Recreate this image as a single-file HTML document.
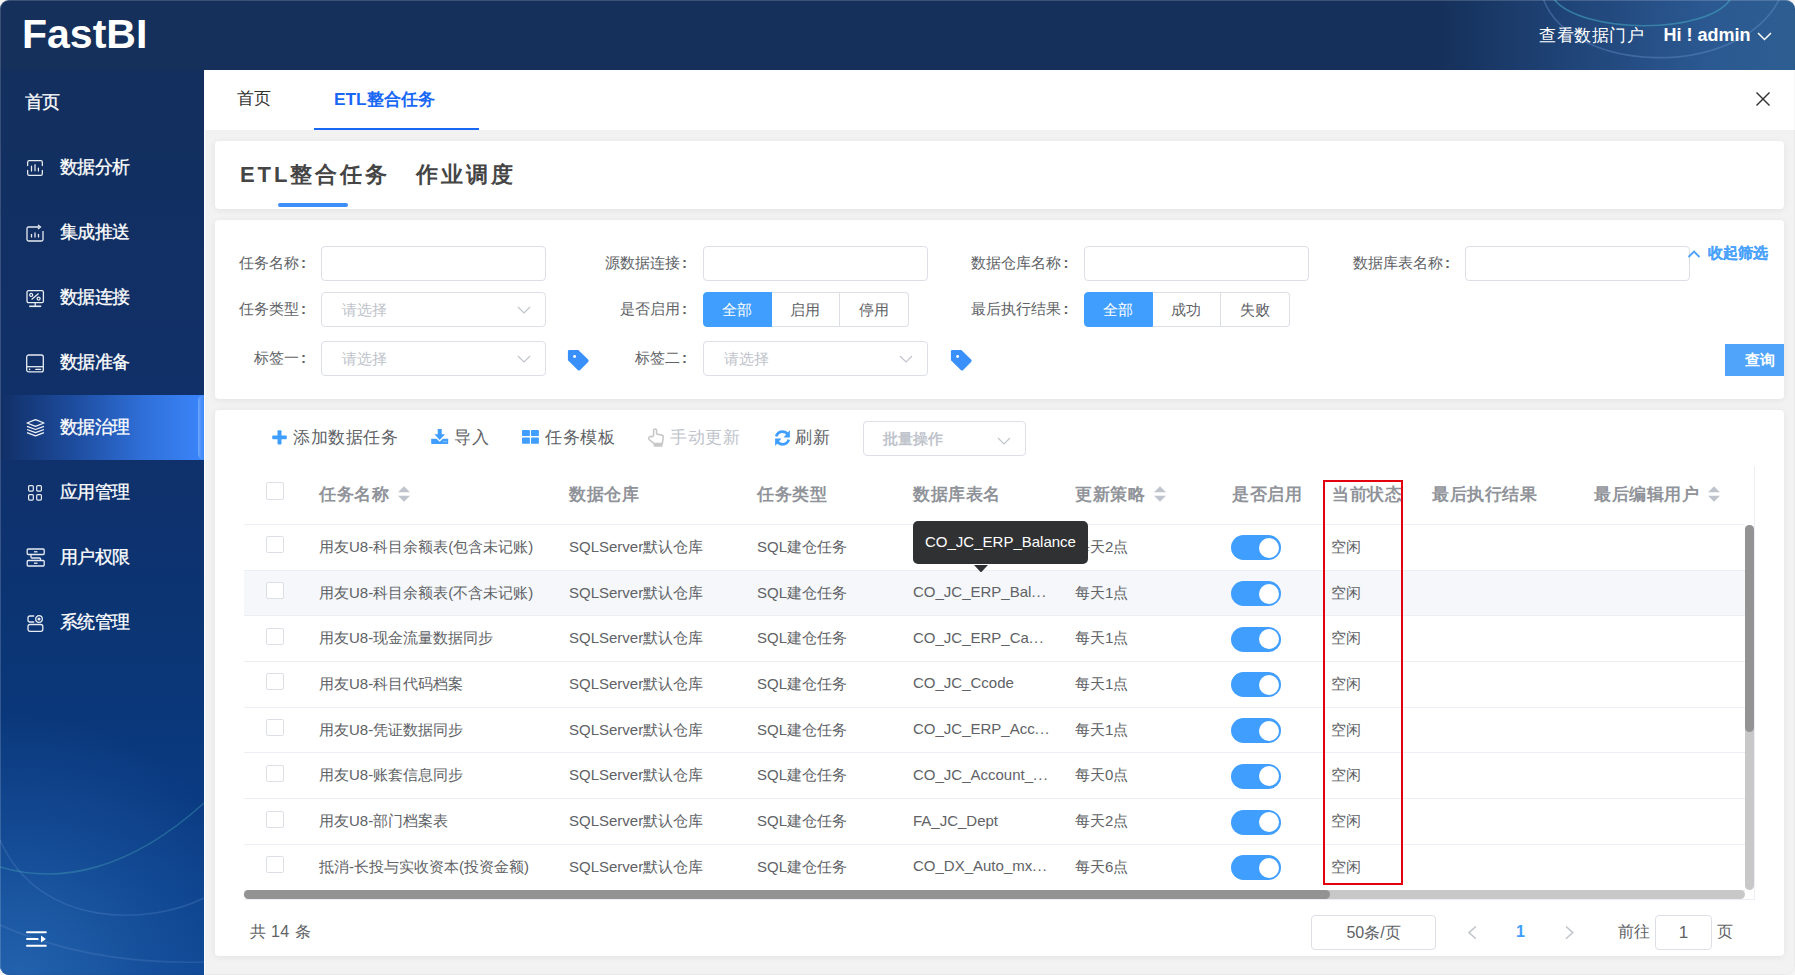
<!DOCTYPE html>
<html><head><meta charset="utf-8">
<style>
*{box-sizing:border-box;margin:0;padding:0}
html,body{width:1795px;height:975px;overflow:hidden;background:#f4f4f4;font-family:"Liberation Sans",sans-serif}
.app{position:absolute;left:0;top:0;width:1795px;height:975px;border-radius:9px;overflow:hidden;background:#f2f2f2}
.abs{position:absolute}
.header{position:absolute;left:0;top:0;width:1795px;height:70px;background:linear-gradient(90deg,#15305a 0%,#15305a 80%,#1f4376 87%,#2b5891 95%,#2d5e91 100%)}
.logo{position:absolute;left:22px;top:10.8px;font-size:41px;font-weight:bold;color:#fff;line-height:46px;letter-spacing:0}
.hlink{position:absolute;left:1539px;top:23.5px;letter-spacing:0.5px;font-size:17px;color:#fff;line-height:24px}
.huser{position:absolute;left:1663.5px;top:23px;font-size:18px;font-weight:bold;color:#fff;line-height:24px}
.side{position:absolute;left:0;top:70px;width:204px;height:905px;background:radial-gradient(ellipse 250px 260px at 10% 100%,rgba(40,105,180,0.8) 0%,rgba(40,105,180,0.3) 55%,rgba(40,105,180,0) 100%),linear-gradient(180deg,#132f5e 0%,#10306a 40%,#0b3574 63%,#0a3a81 80%,#0c4390 100%)}
.mi{position:absolute;left:0;width:204px;height:65px}
.mi .t{position:absolute;left:60px;top:0;line-height:65px;font-size:17.5px;color:#fff;-webkit-text-stroke:0.3px #fff;letter-spacing:-0.6px}
.mi svg{position:absolute;left:26px;top:24px}
.mi.active{background:linear-gradient(90deg,#112f66 0%,#1d4b9c 35%,#2f6fd8 70%,#3b85fb 100%)}
.mi.active:after{content:"";position:absolute;right:0;top:0;width:6px;height:65px;background:linear-gradient(90deg,#6ea9ff 0%,#4c90fc 50%,#3f88fb 100%);border-radius:6px 0 0 6px}
.tabs{position:absolute;left:204px;top:70px;width:1591px;height:60px;background:#fff}
.tab{position:absolute;top:0.5px;line-height:56px;font-size:17px;color:#333}
.card{position:absolute;left:215px;width:1569px;background:#fff;border-radius:4px;box-shadow:0 1px 6px rgba(0,0,0,.07);overflow:hidden}
.lbl{position:absolute;font-size:15px;color:#606266;line-height:33.6px;text-align:right;white-space:nowrap}
.co{font-style:normal;margin-left:2.2px;font-weight:bold}
.inp{position:absolute;width:225px;height:35px;border:1px solid #dcdfe6;border-radius:4px;background:#fff}
.ph{position:absolute;left:20px;top:0;line-height:33px;font-size:15px;color:#c0c4cc}
.chev{position:absolute;right:14px;top:13px}
.rg{position:absolute;height:35px;display:flex}
.rg span{width:68.5px;height:35px;border:1px solid #dcdfe6;border-left:none;line-height:33px;text-align:center;font-size:15px;color:#606266;background:#fff}
.rg span:first-child{border-left:1px solid #dcdfe6;border-radius:4px 0 0 4px}
.rg span:last-child{border-radius:0 4px 4px 0}
.rg span.on{background:#409eff;border-color:#409eff;color:#fff}
.tb{position:absolute;top:423px;line-height:30px;font-size:17px;letter-spacing:0.5px;color:#606266;white-space:nowrap}
.tb svg{position:absolute}
.th{position:absolute;top:466px;line-height:58px;font-size:17px;letter-spacing:0.5px;font-weight:bold;color:#909399;white-space:nowrap}
.row{position:absolute;left:244px;width:1501px;height:45.72px;border-bottom:1px solid #ebeef5}
.row.hover{background:#f5f7fa}
.row .c{position:absolute;top:-1px;line-height:45px;font-size:15px;color:#606266;white-space:nowrap}
.row .cb{position:absolute;top:11.5px;width:18px;height:17px;border:1px solid #dcdfe6;border-radius:2px;background:#fff}
.row .sw{position:absolute;top:10.5px;width:50px;height:25px;border-radius:13px;background:#409eff}
.row .sw i{position:absolute;right:2.5px;top:2.5px;width:20px;height:20px;border-radius:50%;background:#fff}
</style></head><body>
<div class="app">

<!-- HEADER -->
<div class="header">
  <svg class="abs" style="left:1480px;top:0" width="315" height="70" viewBox="0 0 315 70">
    <path d="M73 -2 C100 35 230 35 251 -2" fill="none" stroke="rgba(70,170,195,0.55)" stroke-width="1.6"/>
    <path d="M63 -2 C90 75 260 80 300 -2" fill="none" stroke="rgba(120,165,225,0.32)" stroke-width="1.6"/>
  </svg>
  <div class="logo">FastBI</div>
  <div class="hlink">查看数据门户</div>
  <div class="huser">Hi ! admin</div>
  <svg class="abs" style="left:1757px;top:32px" width="15" height="9" viewBox="0 0 15 9"><path d="M1 1 L7.5 7.5 L14 1" fill="none" stroke="#fff" stroke-width="1.5"/></svg>
</div>

<!-- SIDEBAR -->
<div class="side">
  <svg class="abs" style="left:0;top:680px" width="204" height="225" viewBox="0 0 204 225">
    <path d="M0 90 C40 180 150 175 204 148" fill="none" stroke="rgba(120,160,215,0.22)" stroke-width="1.6"/>
    <path d="M0 117 C60 135 130 120 204 53" fill="none" stroke="rgba(80,180,190,0.32)" stroke-width="1.6"/>
    <path d="M0 175 Q90 215 204 212" fill="none" stroke="rgba(120,160,215,0.2)" stroke-width="1.6"/>
  </svg>
  <div class="mi" style="top:0"><span class="t" style="left:25px">首页</span></div>
  <div class="mi" style="top:65px">
    <svg width="18" height="18" viewBox="0 0 18 18" style="left:26px;top:24px"><g fill="none" stroke="#e8ecf3" stroke-width="1.25" stroke-linecap="round"><path d="M1.65 6.6 V3.2 Q1.65 1.65 3.2 1.65 H14.8 Q16.35 1.65 16.35 3.2 V6.6"/><path d="M1.65 11.4 V14.8 Q1.65 16.35 3.2 16.35 H14.8 Q16.35 16.35 16.35 14.8 V11.4"/><path d="M5.5 7 V12"/><path d="M9 5.7 V11.7"/><path d="M12.4 9 V12"/></g></svg>
    <span class="t">数据分析</span></div>
  <div class="mi" style="top:130px">
    <svg width="18" height="18" viewBox="0 0 18 18" style="left:26px;top:23.5px"><g fill="none" stroke="#e8ecf3" stroke-width="1.3"><path d="M13 3 H2.5 Q1 3 1 4.5 V15.5 Q1 17 2.5 17 H15.5 Q17 17 17 15.5 V7"/><path d="M12 1 L14.5 3 L12 5"/><path d="M5.5 10 V13.5"/><path d="M9 8.5 V13.5"/><path d="M12.5 10 V13.5"/></g></svg>
    <span class="t">集成推送</span></div>
  <div class="mi" style="top:195px">
    <svg width="20" height="20" viewBox="0 0 20 20" style="left:26px;top:24px"><g fill="none" stroke="#e8ecf3" stroke-width="1.3"><rect x="1" y="1.7" width="16.4" height="12" rx="1.5"/><path d="M9.2 13.7 V17"/><path d="M3.2 17.3 H15.2" stroke-width="1.6"/><path d="M5.6 10.6 L12.6 4.6"/><circle cx="5.2" cy="5.9" r="1.5"/><circle cx="12.6" cy="9.6" r="1.5"/></g></svg>
    <span class="t">数据连接</span></div>
  <div class="mi" style="top:260px">
    <svg width="20" height="20" viewBox="0 0 20 20" style="left:26px;top:24px"><g fill="none" stroke="#e8ecf3" stroke-width="1.3"><rect x="0.7" y="1" width="16.6" height="16.9" rx="2"/><path d="M0.7 12.7 H17.3"/><path d="M9.8 15.4 H14.6" stroke-linecap="round"/><circle cx="3.6" cy="15.4" r="0.8" fill="#e8ecf3" stroke="none"/></g></svg>
    <span class="t">数据准备</span></div>
  <div class="mi active" style="top:325px">
    <svg width="20" height="20" viewBox="0 0 20 20" style="left:25.5px;top:23px"><g fill="none" stroke="#f0f3f8" stroke-width="1.3" stroke-linejoin="round"><path d="M1.05 5 L9.5 1.65 L17.95 5 L9.5 8.35 Z"/><path d="M1.05 8.3 L9.5 11.5 L17.95 8.3"/><path d="M1.05 11.5 L9.5 14.7 L17.95 11.5"/><path d="M1.05 14.7 L9.5 17.9 L17.95 14.7"/></g></svg>
    <span class="t">数据治理</span></div>
  <div class="mi" style="top:390px">
    <svg width="20" height="20" viewBox="0 0 20 20" style="left:26px;top:24px"><g fill="none" stroke="#e8ecf3" stroke-width="1.2"><rect x="2.6" y="1.6" width="4.7" height="5.5" rx="1"/><rect x="10.7" y="1.6" width="4.7" height="5.5" rx="1"/><rect x="2.6" y="10.6" width="4.7" height="5.5" rx="1"/><rect x="10.7" y="10.6" width="4.7" height="5.5" rx="1"/></g></svg>
    <span class="t">应用管理</span></div>
  <div class="mi" style="top:455px">
    <svg width="20" height="20" viewBox="0 0 20 20" style="left:25.5px;top:22.3px"><g fill="none" stroke="#e8ecf3" stroke-width="1.3"><rect x="1.2" y="2" width="17" height="5.5" rx="1"/><rect x="1.2" y="13.5" width="17" height="5.5" rx="1"/><path d="M8 4.8 H11.5"/><path d="M8 16.2 H11.5"/><path d="M5 7.5 V10 Q5 11 6 11 H13.5 Q14.5 11 14.5 12 V13.5"/></g></svg>
    <span class="t">用户权限</span></div>
  <div class="mi" style="top:520px">
    <svg width="20" height="20" viewBox="0 0 20 20" style="left:26px;top:24px"><g fill="none" stroke="#e8ecf3" stroke-width="1.3"><path d="M8.2 2 H4 Q2 2 2 4 V6 Q2 8 4 8 H8.2"/><circle cx="13" cy="5" r="3.3"/><circle cx="13" cy="5" r="0.9" fill="#fff"/><rect x="2" y="10.5" width="14.8" height="6.8" rx="2"/></g></svg>
    <span class="t">系统管理</span></div>
  <svg class="abs" style="left:26px;top:859.5px" width="22" height="18" viewBox="0 0 22 18"><g stroke="#fff" stroke-width="2" stroke-linecap="round"><path d="M1 2.2 H19.8"/><path d="M1 9 H11.6"/><path d="M1 15.8 H19.8"/></g><path d="M15 5.6 L19.9 9 L15 12.4 Z" fill="#fff"/></svg>
</div>

<!-- TABS -->
<div class="tabs">
  <div class="tab" style="left:33px">首页</div>
  <div class="tab" style="left:130px;color:#1867f5;font-weight:bold;font-size:17.3px">ETL整合任务</div>
  <div class="abs" style="left:110px;top:58px;width:165px;height:2px;background:#1867f5"></div>
  <svg class="abs" style="left:1551px;top:21px" width="16" height="16" viewBox="0 0 16 16"><g stroke="#333" stroke-width="1.4"><path d="M1.5 1.5 L14.5 14.5"/><path d="M14.5 1.5 L1.5 14.5"/></g></svg>
</div>

<!-- CARD 1 -->
<div class="card" style="top:141px;height:68px">
  <div class="abs" style="left:25px;top:17px;font-size:22px;font-weight:bold;color:#454545;letter-spacing:2.9px;line-height:34px;white-space:nowrap">ETL整合任务</div>
  <div class="abs" style="left:201px;top:17px;font-size:22px;font-weight:bold;color:#454545;letter-spacing:2.9px;line-height:34px;white-space:nowrap">作业调度</div>
  <div class="abs" style="left:63px;top:62px;width:70px;height:4px;background:#3d8ef8;border-radius:2px"></div>
</div>

<!-- CARD 2 -->
<div class="card" style="top:220px;height:178.8px"></div>
<div class="lbl" style="left:200px;width:106px;top:246px">任务名称<i class="co">:</i></div>
<div class="inp" style="left:321px;top:246px"></div>
<div class="lbl" style="left:560px;width:127px;top:246px">源数据连接<i class="co">:</i></div>
<div class="inp" style="left:703px;top:246px"></div>
<div class="lbl" style="left:900px;width:168.5px;top:246px">数据仓库名称<i class="co">:</i></div>
<div class="inp" style="left:1084px;top:246px"></div>
<div class="lbl" style="left:1280px;width:170px;top:246px">数据库表名称<i class="co">:</i></div>
<div class="inp" style="left:1465px;top:246px"></div>
<svg class="abs" style="left:1687px;top:249px" width="14" height="10" viewBox="0 0 14 10"><path d="M1.5 8 L7 2.5 L12.5 8" fill="none" stroke="#4aa2fb" stroke-width="1.9"/></svg>
<div class="abs" style="left:1708px;top:242.4px;line-height:22px;font-size:15px;font-weight:bold;color:#4aa2fb;-webkit-text-stroke:0.2px #4aa2fb">收起筛选</div>

<div class="lbl" style="left:200px;width:106px;top:292px">任务类型<i class="co">:</i></div>
<div class="inp" style="left:321px;top:292px"><span class="ph">请选择</span><svg class="chev" width="14" height="8" viewBox="0 0 14 8"><path d="M1 1 L7 7 L13 1" fill="none" stroke="#c0c4cc" stroke-width="1.2"/></svg></div>
<div class="lbl" style="left:560px;width:127px;top:292px">是否启用<i class="co">:</i></div>
<div class="rg" style="left:703px;top:292px"><span class="on">全部</span><span>启用</span><span>停用</span></div>
<div class="lbl" style="left:900px;width:168.5px;top:292px">最后执行结果<i class="co">:</i></div>
<div class="rg" style="left:1084px;top:292px"><span class="on">全部</span><span>成功</span><span>失败</span></div>

<div class="lbl" style="left:200px;width:106px;top:341px">标签一<i class="co">:</i></div>
<div class="inp" style="left:321px;top:341px"><span class="ph">请选择</span><svg class="chev" width="14" height="8" viewBox="0 0 14 8"><path d="M1 1 L7 7 L13 1" fill="none" stroke="#c0c4cc" stroke-width="1.2"/></svg></div>
<svg class="abs" style="left:566px;top:348px" width="24" height="24" viewBox="0 0 24 24"><path d="M1.9 3.2 Q1.9 1.9 3.2 1.9 H12.3 L22.1 11.4 Q23.3 12.7 22.1 14 L14.2 21.9 Q13 23.1 11.8 21.9 L1.9 12.3 Z" fill="#3990fa"/><circle cx="8.6" cy="8.5" r="1.45" fill="#fff"/></svg>
<div class="lbl" style="left:560px;width:127px;top:341px">标签二<i class="co">:</i></div>
<div class="inp" style="left:703px;top:341px"><span class="ph">请选择</span><svg class="chev" width="14" height="8" viewBox="0 0 14 8"><path d="M1 1 L7 7 L13 1" fill="none" stroke="#c0c4cc" stroke-width="1.2"/></svg></div>
<svg class="abs" style="left:949px;top:348px" width="24" height="24" viewBox="0 0 24 24"><path d="M1.9 3.2 Q1.9 1.9 3.2 1.9 H12.3 L22.1 11.4 Q23.3 12.7 22.1 14 L14.2 21.9 Q13 23.1 11.8 21.9 L1.9 12.3 Z" fill="#3990fa"/><circle cx="8.6" cy="8.5" r="1.45" fill="#fff"/></svg>
<div class="abs" style="left:1725px;top:344px;width:59px;height:31.5px;background:#50a5fb;color:#fff;font-size:15px;font-weight:bold;line-height:31px;padding-left:20px">查询</div>

<!-- CARD 3 -->
<div class="card" style="top:410.3px;height:545.5px"></div>
<svg class="abs" style="left:272px;top:429.5px" width="15" height="15" viewBox="0 0 15 15"><g fill="#409eff"><rect x="0.2" y="5.4" width="14.6" height="3.9" rx="1"/><rect x="5.5" y="0.2" width="4" height="14.2" rx="1"/></g></svg>
<div class="tb" style="left:293px">添加数据任务</div>
<svg class="abs" style="left:430px;top:428px" width="19" height="17" viewBox="0 0 19 17"><path d="M7.7 1 H11.7 V6.3 H15 L9.7 11.9 L4.4 6.3 H7.7 Z" fill="#409eff"/><path d="M1.2 10.8 H6.5 L9.7 13.7 L12.9 10.8 H18.2 V15.3 Q18.2 16 17.5 16 H1.9 Q1.2 16 1.2 15.3 Z" fill="#409eff"/><rect x="13.3" y="13" width="1" height="1.3" fill="#fff" opacity=".6"/><rect x="15.4" y="13" width="1" height="1.3" fill="#fff" opacity=".6"/></svg>
<div class="tb" style="left:454px">导入</div>
<svg class="abs" style="left:522.2px;top:429.9px" width="17" height="14" viewBox="0 0 17 14"><g fill="#409eff"><rect x="0" y="0" width="7.9" height="6.1" rx="0.9"/><rect x="9" y="0" width="7.9" height="6.1" rx="0.9"/><rect x="0" y="7.5" width="7.9" height="6.3" rx="0.9"/><rect x="9" y="7.5" width="7.9" height="6.3" rx="0.9"/></g></svg>
<div class="tb" style="left:545px">任务模板</div>
<svg class="abs" style="left:644px;top:424px" width="24" height="26" viewBox="0 0 24 26"><path d="M9.6 12 V6.6 Q9.6 5 11.1 5 Q12.6 5 12.6 6.6 V10 L17.6 11.1 Q19.5 11.6 19.2 13.6 L18.3 19.6 H10.2 L5.2 15.6 Q4 14.4 5.1 13.2 Q6.6 11.9 9.6 12.6" fill="none" stroke="#c8c8c8" stroke-width="1.6" stroke-linejoin="round"/><rect x="9.6" y="19.4" width="9" height="3.4" rx="1" fill="#c8c8c8"/></svg>
<div class="tb" style="left:670px;color:#c0c4cc">手动更新</div>
<svg class="abs" style="left:772.5px;top:428.5px" width="19" height="18" viewBox="0 0 18 17"><g fill="none" stroke="#409eff" stroke-width="2.6"><path d="M3 7 Q4.5 2.5 9 2.5 Q12 2.5 14 5"/><path d="M15 10 Q13.5 14.5 9 14.5 Q6 14.5 4 12"/></g><path d="M16 1 V8 H10 Z" fill="#409eff"/><path d="M2 16 V9 H8 Z" fill="#409eff"/></svg>
<div class="tb" style="left:795px">刷新</div>
<div class="inp" style="left:863px;top:421px;width:163px;height:35px"><span class="ph" style="left:19px;line-height:33px;font-weight:bold;color:#c0c4cc">批量操作</span><svg class="chev" width="14" height="8" viewBox="0 0 14 8" style="top:15px"><path d="M1 1 L7 7 L13 1" fill="none" stroke="#c0c4cc" stroke-width="1.2"/></svg></div>

<!-- table -->
<div class="abs" style="left:244px;top:466px;width:1511px;height:434px;border-right:1px solid #ebeef5;border-bottom:1px solid #ebeef5"></div>
<div class="abs" style="left:244px;top:523.5px;width:1501px;height:1px;background:#ebeef5"></div>
<span class="abs" style="left:266px;top:482px;width:18px;height:18px;border:1px solid #dcdfe6;border-radius:2px;background:#fff"></span>
<div class="th" style="left:319px">任务名称</div>
<div class="th" style="left:569px">数据仓库</div>
<div class="th" style="left:757px">任务类型</div>
<div class="th" style="left:913px">数据库表名</div>
<div class="th" style="left:1075px">更新策略</div>
<div class="th" style="left:1232px">是否启用</div>
<div class="th" style="left:1332px">当前状态</div>
<div class="th" style="left:1432px">最后执行结果</div>
<div class="th" style="left:1594px">最后编辑用户</div>
<svg class="abs" style="left:398px;top:486px" width="12" height="16" viewBox="0 0 12 16"><path d="M6 0.3 L12 6.2 H0 Z M6 15.7 L12 9.8 H0 Z" fill="#c0c4cc"/></svg>
<svg class="abs" style="left:1154px;top:486px" width="12" height="16" viewBox="0 0 12 16"><path d="M6 0.3 L12 6.2 H0 Z M6 15.7 L12 9.8 H0 Z" fill="#c0c4cc"/></svg>
<svg class="abs" style="left:1708px;top:486px" width="12" height="16" viewBox="0 0 12 16"><path d="M6 0.3 L12 6.2 H0 Z M6 15.7 L12 9.8 H0 Z" fill="#c0c4cc"/></svg>

<div class="row" style="top:524.80px"><span class="cb" style="left:22px"></span><span class="c" style="left:75px">用友U8-科目余额表(包含未记账)</span><span class="c" style="left:325px">SQLServer默认仓库</span><span class="c" style="left:513px">SQL建仓任务</span><span class="c" style="left:669px;top:-1.5px"></span><span class="c" style="left:831px">每天2点</span><span class="sw" style="left:987px"><i></i></span><span class="c" style="left:1087px">空闲</span></div>
<div class="row hover" style="top:570.52px"><span class="cb" style="left:22px"></span><span class="c" style="left:75px">用友U8-科目余额表(不含未记账)</span><span class="c" style="left:325px">SQLServer默认仓库</span><span class="c" style="left:513px">SQL建仓任务</span><span class="c" style="left:669px;top:-1.5px">CO_JC_ERP_Bal<span style="letter-spacing:1px">...</span></span><span class="c" style="left:831px">每天1点</span><span class="sw" style="left:987px"><i></i></span><span class="c" style="left:1087px">空闲</span></div>
<div class="row" style="top:616.24px"><span class="cb" style="left:22px"></span><span class="c" style="left:75px">用友U8-现金流量数据同步</span><span class="c" style="left:325px">SQLServer默认仓库</span><span class="c" style="left:513px">SQL建仓任务</span><span class="c" style="left:669px;top:-1.5px">CO_JC_ERP_Ca<span style="letter-spacing:1px">...</span></span><span class="c" style="left:831px">每天1点</span><span class="sw" style="left:987px"><i></i></span><span class="c" style="left:1087px">空闲</span></div>
<div class="row" style="top:661.96px"><span class="cb" style="left:22px"></span><span class="c" style="left:75px">用友U8-科目代码档案</span><span class="c" style="left:325px">SQLServer默认仓库</span><span class="c" style="left:513px">SQL建仓任务</span><span class="c" style="left:669px;top:-1.5px">CO_JC_Ccode</span><span class="c" style="left:831px">每天1点</span><span class="sw" style="left:987px"><i></i></span><span class="c" style="left:1087px">空闲</span></div>
<div class="row" style="top:707.68px"><span class="cb" style="left:22px"></span><span class="c" style="left:75px">用友U8-凭证数据同步</span><span class="c" style="left:325px">SQLServer默认仓库</span><span class="c" style="left:513px">SQL建仓任务</span><span class="c" style="left:669px;top:-1.5px">CO_JC_ERP_Acc<span style="letter-spacing:1px">...</span></span><span class="c" style="left:831px">每天1点</span><span class="sw" style="left:987px"><i></i></span><span class="c" style="left:1087px">空闲</span></div>
<div class="row" style="top:753.40px"><span class="cb" style="left:22px"></span><span class="c" style="left:75px">用友U8-账套信息同步</span><span class="c" style="left:325px">SQLServer默认仓库</span><span class="c" style="left:513px">SQL建仓任务</span><span class="c" style="left:669px;top:-1.5px">CO_JC_Account_<span style="letter-spacing:1px">...</span></span><span class="c" style="left:831px">每天0点</span><span class="sw" style="left:987px"><i></i></span><span class="c" style="left:1087px">空闲</span></div>
<div class="row" style="top:799.12px"><span class="cb" style="left:22px"></span><span class="c" style="left:75px">用友U8-部门档案表</span><span class="c" style="left:325px">SQLServer默认仓库</span><span class="c" style="left:513px">SQL建仓任务</span><span class="c" style="left:669px;top:-1.5px">FA_JC_Dept</span><span class="c" style="left:831px">每天2点</span><span class="sw" style="left:987px"><i></i></span><span class="c" style="left:1087px">空闲</span></div>
<div class="row" style="top:844.84px"><span class="cb" style="left:22px"></span><span class="c" style="left:75px">抵消-长投与实收资本(投资金额)</span><span class="c" style="left:325px">SQLServer默认仓库</span><span class="c" style="left:513px">SQL建仓任务</span><span class="c" style="left:669px;top:-1.5px">CO_DX_Auto_mx<span style="letter-spacing:1px">...</span></span><span class="c" style="left:831px">每天6点</span><span class="sw" style="left:987px"><i></i></span><span class="c" style="left:1087px">空闲</span></div>

<!-- scrollbars -->
<div class="abs" style="left:1745px;top:525px;width:9px;height:365px;background:#c8c8c8;border-radius:5px"></div>
<div class="abs" style="left:1745px;top:525px;width:9px;height:207px;background:#939393;border-radius:5px"></div>
<div class="abs" style="left:244px;top:890px;width:1501px;height:9px;background:#c8c8c8;border-radius:5px"></div>
<div class="abs" style="left:244px;top:890px;width:1086px;height:9px;background:#939393;border-radius:5px"></div>

<!-- red box -->
<div class="abs" style="left:1323px;top:480px;width:80px;height:405px;border:2px solid #e3000f"></div>

<!-- tooltip -->
<div class="abs" style="left:913px;top:521.2px;width:175px;height:42.4px;background:#303133;border-radius:5px;color:#fff;font-size:15px;line-height:41px;text-align:center">CO_JC_ERP_Balance</div>
<svg class="abs" style="left:973.5px;top:564.5px" width="14" height="7.5" viewBox="0 0 14 7.5"><path d="M0 0 H14 L7 7.5 Z" fill="#303133"/></svg>

<!-- pagination -->
<div class="abs" style="left:249.5px;top:920px;letter-spacing:0.5px;font-size:16px;color:#606266;line-height:24px">共 14 条</div>
<div class="inp" style="left:1311px;top:915px;width:125px;height:35px;text-align:center;line-height:33px;font-size:16px;color:#606266">50条/页</div>
<svg class="abs" style="left:1467px;top:925px" width="11" height="15" viewBox="0 0 11 15"><path d="M8.8 1.5 L2 7.6 L8.8 13.7" fill="none" stroke="#c0c4cc" stroke-width="1.5"/></svg>
<div class="abs" style="left:1516px;top:920px;font-size:16px;font-weight:bold;color:#409eff;line-height:24px">1</div>
<svg class="abs" style="left:1564px;top:925px" width="11" height="15" viewBox="0 0 11 15"><path d="M2 1.5 L8.8 7.6 L2 13.7" fill="none" stroke="#c0c4cc" stroke-width="1.5"/></svg>
<div class="abs" style="left:1617.5px;top:920px;font-size:16px;color:#606266;line-height:24px">前往</div>
<div class="inp" style="left:1655px;top:915px;width:57px;height:35px;text-align:center;line-height:33px;font-size:17px;color:#606266">1</div>
<div class="abs" style="left:1717px;top:920px;font-size:16px;color:#606266;line-height:24px">页</div>

<div class="abs" style="left:204px;top:130px;width:1px;height:845px;background:#fff"></div>
<div class="abs" style="left:0;top:0;width:1795px;height:975px;border-radius:9px;border-top:1px solid rgba(255,255,255,0.16);border-left:1px solid rgba(255,255,255,0.16);border-right:1px solid rgba(0,0,0,0.03);border-bottom:1px solid rgba(0,0,0,0.03);pointer-events:none"></div>
</div>
</body></html>
